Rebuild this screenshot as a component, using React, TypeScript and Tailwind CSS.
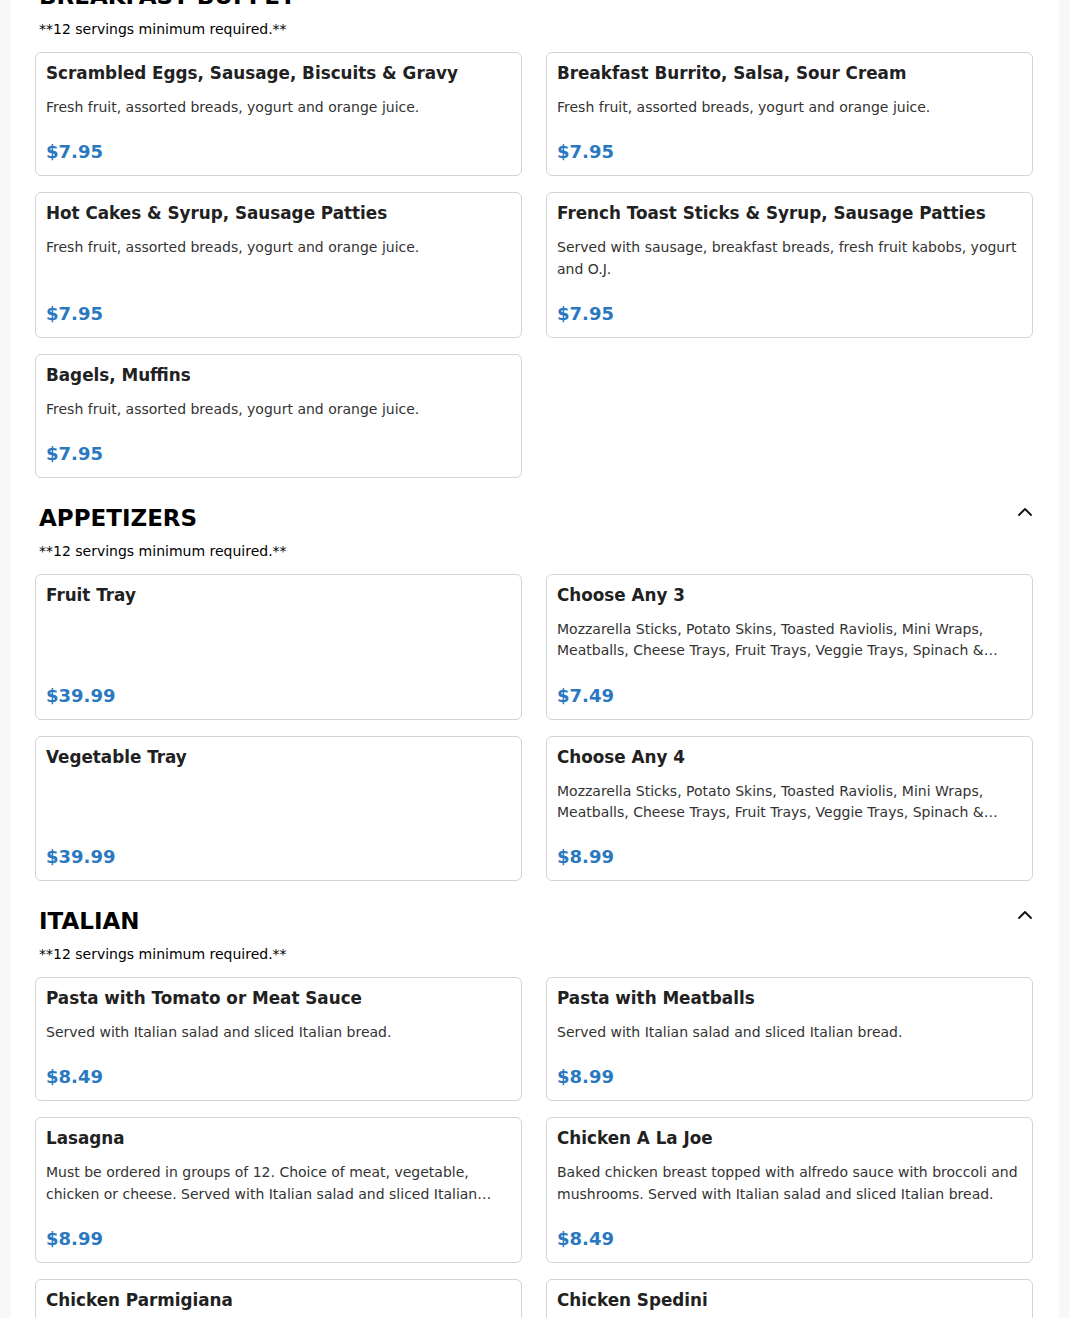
import React from "react";

type Item = { name: string; desc?: string; price: string };

const sections: { title: string; items: Item[] }[] = [
  {
    title: "BREAKFAST BUFFET",
    items: [
      { name: "Scrambled Eggs, Sausage, Biscuits & Gravy", desc: "Fresh fruit, assorted breads, yogurt and orange juice.", price: "$7.95" },
      { name: "Breakfast Burrito, Salsa, Sour Cream", desc: "Fresh fruit, assorted breads, yogurt and orange juice.", price: "$7.95" },
      { name: "Hot Cakes & Syrup, Sausage Patties", desc: "Fresh fruit, assorted breads, yogurt and orange juice.", price: "$7.95" },
      { name: "French Toast Sticks & Syrup, Sausage Patties", desc: "Served with sausage, breakfast breads, fresh fruit kabobs, yogurt and O.J.", price: "$7.95" },
      { name: "Bagels, Muffins", desc: "Fresh fruit, assorted breads, yogurt and orange juice.", price: "$7.95" },
    ],
  },
  {
    title: "APPETIZERS",
    items: [
      { name: "Fruit Tray", price: "$39.99" },
      { name: "Choose Any 3", desc: "Mozzarella Sticks, Potato Skins, Toasted Raviolis, Mini Wraps, Meatballs, Cheese Trays, Fruit Trays, Veggie Trays, Spinach & Artichoke Dip, Buffalo Chicken Dip", price: "$7.49" },
      { name: "Vegetable Tray", price: "$39.99" },
      { name: "Choose Any 4", desc: "Mozzarella Sticks, Potato Skins, Toasted Raviolis, Mini Wraps, Meatballs, Cheese Trays, Fruit Trays, Veggie Trays, Spinach & Artichoke Dip, Buffalo Chicken Dip", price: "$8.99" },
    ],
  },
  {
    title: "ITALIAN",
    items: [
      { name: "Pasta with Tomato or Meat Sauce", desc: "Served with Italian salad and sliced Italian bread.", price: "$8.49" },
      { name: "Pasta with Meatballs", desc: "Served with Italian salad and sliced Italian bread.", price: "$8.99" },
      { name: "Lasagna", desc: "Must be ordered in groups of 12. Choice of meat, vegetable, chicken or cheese. Served with Italian salad and sliced Italian bread.", price: "$8.99" },
      { name: "Chicken A La Joe", desc: "Baked chicken breast topped with alfredo sauce with broccoli and mushrooms. Served with Italian salad and sliced Italian bread.", price: "$8.49" },
      { name: "Chicken Parmigiana", desc: "Served with Italian salad and sliced Italian bread.", price: "$8.99" },
      { name: "Chicken Spedini", desc: "Served with Italian salad and sliced Italian bread.", price: "$8.99" },
    ],
  },
];

function MenuCard({ item }: { item: Item }) {
  return (
    <div className="flex flex-col bg-white border border-[#d4d4d4] rounded-[6px] px-[10px] pt-[9px] pb-[10px]">
      <h3 className="text-[16.8px] leading-[22px] font-bold text-[#212121]">{item.name}</h3>
      {item.desc && (
        <p className="mt-[13px] text-[14px] leading-[21.25px] text-[#333] line-clamp-2">{item.desc}</p>
      )}
      <div className="mt-auto pt-5 text-[18px] leading-[27px] font-bold text-[#2a78c0]">{item.price}</div>
    </div>
  );
}

export default function App() {
  return (
    <div className="min-h-screen bg-[#f8f8f8] px-[11px] font-['DejaVu_Sans',sans-serif] overflow-hidden">
      <div className="bg-white pl-6 pr-[26px] pb-10 -mt-5">
        {sections.map((s, i) => (
          <section key={s.title} className={i === 0 ? "" : "mt-6"}>
            {/* --- SECTION HEADER --- */}
            <div className="flex justify-between items-start pl-1">
              <h2 className="text-[23px] leading-8 font-bold text-black">{s.title}</h2>
              {i > 0 && (
                <svg width="16" height="16" viewBox="0 0 16 16" className="mt-[2px]" fill="none" stroke="#111" strokeWidth="1.8" strokeLinecap="round" strokeLinejoin="round">
                  <polyline points="2,11 8,5 14,11" />
                </svg>
              )}
            </div>
            <p className="mt-[7px] pl-1 text-[14px] leading-5 text-black">**12 servings minimum required.**</p>

            <div className="mt-[13px] grid grid-cols-2 gap-x-6 gap-y-4">
              {s.items.map((item) => (
                <MenuCard key={item.name} item={item} />
              ))}
            </div>
          </section>
        ))}
      </div>
    </div>
  );
}
